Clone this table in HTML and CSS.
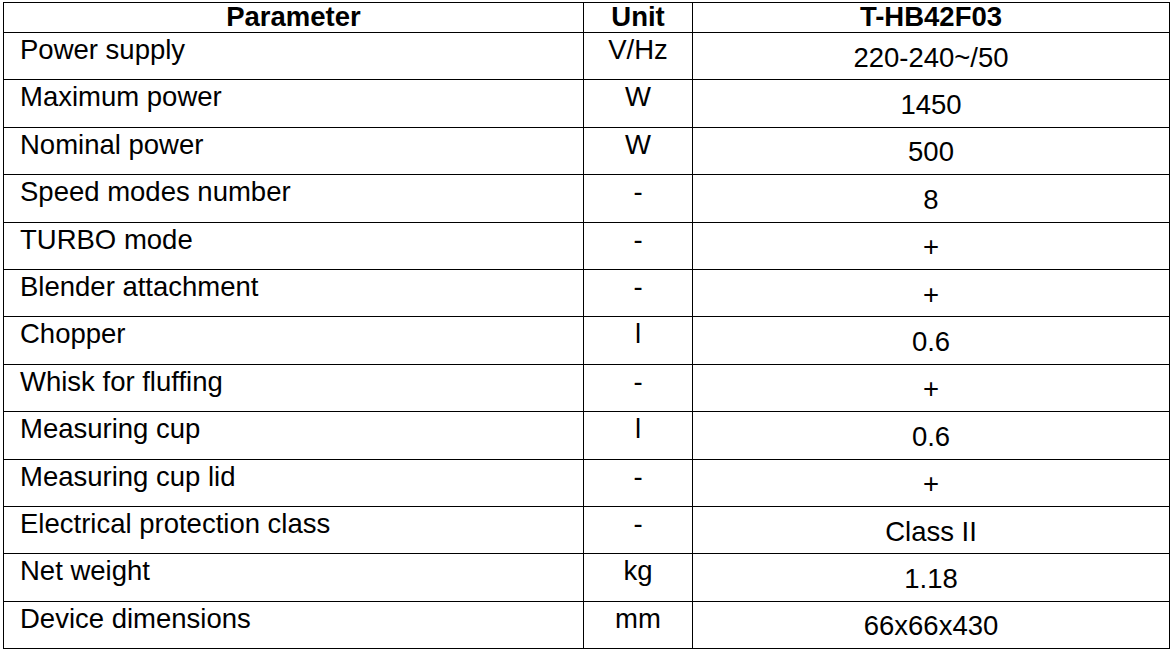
FILE: index.html
```html
<!DOCTYPE html>
<html lang="en">
<head>
<meta charset="utf-8">
<title>Specifications</title>
<link rel="stylesheet" href="styles.css">
</head>
<body>
<table class="spec">
  <colgroup>
    <col class="c-param">
    <col class="c-unit">
    <col class="c-value">
  </colgroup>
  <thead>
    <tr class="head">
      <th>Parameter</th>
      <th>Unit</th>
      <th>T-HB42F03</th>
    </tr>
  </thead>
  <tbody>
    <tr><td class="param">Power supply</td><td class="unit">V/Hz</td><td class="value">220-240~/50</td></tr>
    <tr><td class="param">Maximum power</td><td class="unit">W</td><td class="value">1450</td></tr>
    <tr><td class="param">Nominal power</td><td class="unit">W</td><td class="value">500</td></tr>
    <tr><td class="param">Speed modes number</td><td class="unit">-</td><td class="value">8</td></tr>
    <tr><td class="param">TURBO mode</td><td class="unit">-</td><td class="value">+</td></tr>
    <tr><td class="param">Blender attachment</td><td class="unit">-</td><td class="value">+</td></tr>
    <tr><td class="param">Chopper</td><td class="unit">l</td><td class="value">0.6</td></tr>
    <tr><td class="param">Whisk for fluffing</td><td class="unit">-</td><td class="value">+</td></tr>
    <tr><td class="param">Measuring cup</td><td class="unit">l</td><td class="value">0.6</td></tr>
    <tr><td class="param">Measuring cup lid</td><td class="unit">-</td><td class="value">+</td></tr>
    <tr><td class="param">Electrical protection class</td><td class="unit">-</td><td class="value">Class II</td></tr>
    <tr><td class="param">Net weight</td><td class="unit">kg</td><td class="value">1.18</td></tr>
    <tr><td class="param">Device dimensions</td><td class="unit">mm</td><td class="value">66x66x430</td></tr>
  </tbody>
</table>
</body>
</html>
```
FILE: styles.css
```css
html, body {
  margin: 0;
  padding: 0;
  background: #fff;
}

body {
  padding: 2px 0 0 3px;
  font-family: "Liberation Sans", Arial, sans-serif;
  color: #000;
}

.spec {
  border-collapse: collapse;
  table-layout: fixed;
  width: 1166px;
  font-size: 27.5px;
  line-height: 31px;
}

.c-param { width: 580px; }
.c-unit { width: 109px; }
.c-value { width: 477px; }

.spec th,
.spec td {
  border: 1px solid #000;
  padding: 0;
}

.spec .head {
  height: 30px;
}

.spec .head th {
  font-weight: bold;
  text-align: center;
  vertical-align: top;
  line-height: 27px;
}

.spec tbody tr {
  height: 47.4px;
}

.spec .param {
  text-align: left;
  vertical-align: top;
  padding: 1px 0 0 16px;
}

.spec .unit {
  text-align: center;
  vertical-align: top;
  padding-top: 1px;
}

.spec .value {
  text-align: center;
  vertical-align: middle;
  padding-top: 2px;
}
```
